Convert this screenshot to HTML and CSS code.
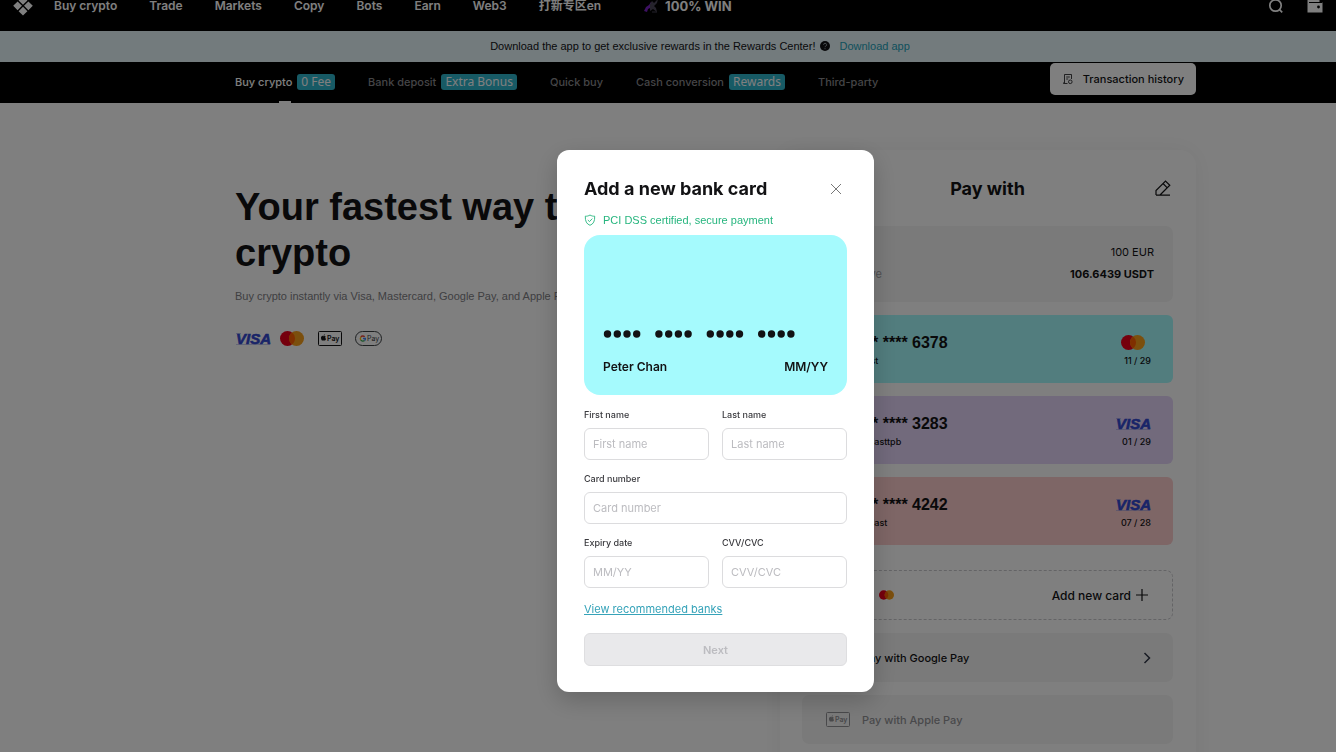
FILE: index.html
```html
<!DOCTYPE html>
<html lang="en">

<head>
    <meta charset="UTF-8">
    <meta name="viewport" content="width=device-width, initial-scale=1.0">
    <title>Buy crypto</title>
    <link rel="stylesheet" href="styles.css">
</head>

<body>
    <!-- shared icons -->
    <svg class="defs" aria-hidden="true">
        <symbol id="visa" viewBox="0 0 36 14">
            <path d="M1 1.500h5M1 12.500h34" stroke="#8a96dc" stroke-width="0.500" />
            <text x="1" y="12" class="visa-text">VISA</text>
        </symbol>
        <symbol id="mastercard" viewBox="0 0 24 15">
            <circle cx="7.5" cy="7.5" r="7.5" fill="#eb001b" />
            <circle cx="16.5" cy="7.5" r="7.5" fill="#f79e1b" />
            <path d="M12 1.5a7.5 7.5 0 0 1 0 12a7.5 7.5 0 0 1 0-12z" fill="#ff5f00" />
        </symbol>
        <symbol id="apple-pay" viewBox="0 0 24 15">
            <rect x="0.5" y="0.5" width="23" height="14" rx="1" fill="none" stroke="currentColor" />
            <path d="M5.6 5.2c.8-.5 1.8-.2 2.2.5c-.8.5-.7 1.7.3 2.1c-.3 1-.9 1.8-1.4 1.8c-.5 0-.6-.2-1.1-.2s-.6.2-1.1.2c-1.3-.2-2.3-4 -.5-4.7c.6-.2 1 .2 1.6.3zM5.6 4.8c0-.8.5-1.4 1.3-1.5c0 .8-.5 1.5-1.3 1.5z" fill="currentColor" />
            <text x="9" y="9.8" class="pay-text">Pay</text>
        </symbol>
        <symbol id="google-pay" viewBox="0 0 27 15">
            <rect x="0.5" y="0.5" width="26" height="14" rx="7" fill="none" stroke="#3c4043" />
            <g fill="none" stroke-width="1.3">
                <path d="M9.7 5.8A2.6 2.6 0 0 0 5.8 6" stroke="#ea4335" />
                <path d="M5.8 6a2.6 2.6 0 0 0 0 3" stroke="#fbbc04" />
                <path d="M5.8 9a2.6 2.6 0 0 0 3.8.5" stroke="#34a853" />
                <path d="M9.6 9.5a2.5 2.5 0 0 0 .8-2H8" stroke="#4285f4" />
            </g>
            <text x="12" y="10" class="pay-text gpay">Pay</text>
        </symbol>
    </svg>

    <header class="topbar">
        <svg class="logo" viewBox="0 0 20 20" fill="#fff">
            <path d="M10 0l4.4 4.4L10 8.8 5.6 4.4zM4.6 5.4L9 9.8l-4.4 4.4L.2 9.8zM15.4 5.4l4.4 4.4-4.4 4.4L11 9.8zM10 10.8l4.4 4.4-4.4 4.4-4.4-4.4z" />
        </svg>
        <nav class="main-nav">
            <a href="#">Buy crypto</a>
            <a href="#">Trade</a>
            <a href="#">Markets</a>
            <a href="#">Copy</a>
            <a href="#">Bots</a>
            <a href="#">Earn</a>
            <a href="#">Web3</a>
            <a href="#">打新专区en</a>
            <a href="#" class="win">
                <svg viewBox="0 0 16 16">
                    <path d="M1 13l2-4 3-2 2-3 2 3-3 3-2 1-1 3z" fill="#7b22c4" />
                    <path d="M7 6l2-3 2 2 4-4-1 4-3 3 2 2 1 4-4-3-3 2z" fill="#4b4658" />
                    <path d="M9 14h5" stroke="#4b4658" />
                </svg>
                100% WIN
            </a>
        </nav>
        <div class="tools">
            <svg viewBox="0 0 16 16" fill="none" stroke="#fff" stroke-width="1.7">
                <circle cx="7.5" cy="7.5" r="5.7" />
                <path d="M11.2 11.4l3 3" />
            </svg>
            <svg viewBox="0 0 16 16">
                <path d="M.5 2h12v2h3v10.500H.5z" fill="#fff" />
                <path d="M2 4.500h13.500" stroke="#000" />
                <circle cx="11.500" cy="9" r="1.400" fill="#000" />
            </svg>
        </div>
    </header>

    <div class="banner">
        <span>Download the app to get exclusive rewards in the Rewards Center!</span>
        <svg viewBox="0 0 12 12">
            <circle cx="6" cy="6" r="5" fill="#121214" />
            <path d="M4.600 4.800a1.500 1.500 0 1 1 2 1.400q-.6.200-.6 1M6 8.200v1" fill="none" stroke="#a0aab0" stroke-width="0.9" />
        </svg>
        <a href="#">Download app</a>
    </div>

    <div class="subnav">
        <div class="container">
            <nav class="tabs">
                <a href="#" class="active">Buy crypto <span class="badge">0 Fee</span></a>
                <a href="#">Bank deposit <span class="badge">Extra Bonus</span></a>
                <a href="#">Quick buy</a>
                <a href="#">Cash conversion <span class="badge">Rewards</span></a>
                <a href="#">Third-party</a>
            </nav>
            <button class="history">
                <svg viewBox="0 0 12 12" fill="none" stroke="#121214" stroke-width="0.800">
                    <path d="M5.500 10.500h-4v-1M2.500 10V1.500h7V6M4.200 4h3.600M4.200 6h2" />
                    <circle cx="8.300" cy="8.800" r="1.800" />
                </svg>
                Transaction history
            </button>
        </div>
    </div>

    <main class="container content">
        <section class="intro">
            <h1>Your fastest way to buy crypto</h1>
            <p>Buy crypto instantly via Visa, Mastercard, Google Pay, and Apple Pay</p>
            <div class="brands">
                <svg class="visa"><use href="#visa" /></svg>
                <svg class="mc"><use href="#mastercard" /></svg>
                <svg class="apple"><use href="#apple-pay" /></svg>
                <svg class="google"><use href="#google-pay" /></svg>
            </div>
        </section>

        <section class="pay-panel">
            <div class="pay-head">
                <h2>Pay with</h2>
                <button class="edit" aria-label="Edit">
                    <svg viewBox="0 0 16 16" fill="none" stroke="#121214" stroke-width="1.200">
                        <path d="M1 15.200h14M1 15v-4.500L10.500 1l4.300 4.300L5 15M8 3.500l4.300 4.300" />
                    </svg>
                </button>
            </div>

            <div class="summary">
                <div><span>You pay</span><span class="amount">100 EUR</span></div>
                <div><span>You receive</span><strong>106.6439 USDT</strong></div>
            </div>

            <div class="saved cyan">
                <div><b>**** **** **** 6378</b><small>testtest1 test</small></div>
                <div class="meta"><svg class="mc"><use href="#mastercard" /></svg><small>11 / 29</small></div>
            </div>
            <div class="saved purple">
                <div><b>**** **** **** 3283</b><small>testingtest lasttpb</small></div>
                <div class="meta"><svg class="visa"><use href="#visa" /></svg><small>01 / 29</small></div>
            </div>
            <div class="saved pink">
                <div><b>**** **** **** 4242</b><small>testingtest last</small></div>
                <div class="meta"><svg class="visa"><use href="#visa" /></svg><small>07 / 28</small></div>
            </div>

            <button class="add-card">
                <svg class="visa"><use href="#visa" /></svg>
                <svg class="mc-small"><use href="#mastercard" /></svg>
                <span>Add new card</span>
                <svg class="plus" viewBox="0 0 12 12" fill="none" stroke="#121214" stroke-width="1.200"><path d="M6 0v12M0 6h12" /></svg>
            </button>
            <button class="method">
                <svg class="google"><use href="#google-pay" /></svg>
                <span>Pay with Google Pay</span>
                <svg class="chevron" viewBox="0 0 8 12" fill="none" stroke="#333a4a" stroke-width="1.500"><path d="M1.500 1l5 5-5 5" /></svg>
            </button>
            <button class="method" disabled>
                <svg class="apple"><use href="#apple-pay" /></svg>
                <span>Pay with Apple Pay</span>
            </button>
        </section>
    </main>

    <div class="overlay">
        <form class="dialog" role="dialog" aria-labelledby="dialogTitle">
            <div class="dialog-head">
                <h2 id="dialogTitle">Add a new bank card</h2>
                <button type="button" class="close" aria-label="Close">
                    <svg viewBox="0 0 10 10" fill="none" stroke="#777" stroke-width="1"><path d="M0 0l10 10M10 0L0 10" /></svg>
                </button>
            </div>
            <div class="secure">
                <svg viewBox="0 0 12 12" fill="none" stroke="#26b57e" stroke-width="0.900">
                    <path d="M6 1c1.500 1 3 1.300 4.700 1.200C10.900 7 9.500 10 6 11.300C2.500 10 1.100 7 1.300 2.200C3 2.300 4.500 2 6 1zM3.800 6l1.700 1.600 2.800-3" />
                </svg>
                PCI DSS certified, secure payment
            </div>

            <div class="card-preview">
                <svg class="dots" viewBox="0 0 192 8" fill="#121214">
                    <g id="dotGroup">
                        <circle cx="4.500" cy="4" r="3.700" />
                        <circle cx="14.300" cy="4" r="3.700" />
                        <circle cx="24" cy="4" r="3.700" />
                        <circle cx="33.700" cy="4" r="3.700" />
                    </g>
                    <use href="#dotGroup" x="51.400" />
                    <use href="#dotGroup" x="102.800" />
                    <use href="#dotGroup" x="154.200" />
                </svg>
                <div class="card-foot"><span>Peter Chan</span><span>MM/YY</span></div>
            </div>

            <div class="fields">
                <div class="field">
                    <label for="firstName">First name</label>
                    <input type="text" id="firstName" placeholder="First name">
                </div>
                <div class="field">
                    <label for="lastName">Last name</label>
                    <input type="text" id="lastName" placeholder="Last name">
                </div>
                <div class="field wide">
                    <label for="cardNumber">Card number</label>
                    <input type="text" id="cardNumber" placeholder="Card number">
                </div>
                <div class="field">
                    <label for="expiry">Expiry date</label>
                    <input type="text" id="expiry" placeholder="MM/YY">
                </div>
                <div class="field">
                    <label for="cvv">CVV/CVC</label>
                    <input type="text" id="cvv" placeholder="CVV/CVC">
                </div>
            </div>
            <a href="#" class="banks">View recommended banks</a>
            <button class="next" disabled>Next</button>
        </form>
    </div>
</body>

</html>
```
FILE: styles.css
```css
* {
    box-sizing: border-box;
}

body {
    margin: 0;
    height: 100vh;
    overflow: hidden;
    font-family: Inter, "Noto Sans CJK SC", sans-serif;
    font-size: 11px;
    color: #121214;
    background: #ffffff;
}

a {
    color: inherit;
    text-decoration: none;
}

button {
    font: inherit;
    color: inherit;
    border: none;
    padding: 0;
    background: none;
    cursor: pointer;
}

h1,
h2,
p {
    margin: 0;
}

svg {
    display: block;
    flex: none;
}

.defs {
    display: none;
}

.container {
    max-width: 961px;
    margin: 0 140px 0 auto;
}

/* brand marks */
.visa {
    width: 36px;
    height: 14px;
}

.mc {
    width: 24px;
    height: 15px;
}

.mc-small {
    width: 15px;
    height: 10px;
}

.apple {
    width: 24px;
    height: 15px;
}

.google {
    width: 27px;
    height: 15px;
}

.visa-text {
    font: italic 700 15px "Liberation Sans", sans-serif;
    fill: #3248d0;
    stroke: #3248d0;
    stroke-width: 0.6px;
}

.pay-text {
    font: 600 7px Inter, sans-serif;
    fill: currentColor;
}

.gpay {
    font-weight: 400;
    fill: #3c4043;
}

/* top bar */
.topbar {
    display: flex;
    align-items: center;
    height: 50px;
    margin-top: -19px;
    padding: 0 13px;
    background: #000000;
    color: #ffffff;
}

.logo {
    width: 20px;
    height: 20px;
}

.main-nav {
    display: flex;
    gap: 32px;
    margin-left: 21px;
    font-size: 12px;
    line-height: 16px;
    font-weight: 600;
}

.win {
    display: flex;
    align-items: center;
    gap: 6px;
    margin-left: 10px;
    font-size: 13px;
    font-weight: 700;
}

.win svg {
    width: 16px;
    height: 16px;
}

.tools {
    display: flex;
    gap: 23px;
    margin-left: auto;
}

.tools svg {
    width: 16px;
    height: 16px;
}

/* banner */
.banner {
    display: flex;
    justify-content: center;
    align-items: center;
    gap: 4px;
    height: 31px;
    padding: 0 0 1px 64px;
    background: #e6f6fb;
    font-family: "Liberation Sans", sans-serif;
}

.banner svg {
    width: 12px;
    height: 12px;
}

.banner a {
    margin-left: 4px;
    color: #1ea2b8;
}

/* sub navigation */
.subnav {
    background: #000000;
}

.subnav .container {
    display: flex;
    justify-content: space-between;
    height: 41px;
}

.tabs {
    display: flex;
    gap: 33px;
    font-weight: 500;
    color: #8a8a8e;
}

.tabs a {
    position: relative;
    display: flex;
    align-items: center;
    gap: 5px;
    padding-bottom: 2px;
}

.tabs .active {
    color: #ffffff;
}

.active::after {
    content: "";
    position: absolute;
    bottom: 0;
    left: 50%;
    width: 12px;
    height: 2px;
    margin-left: -6px;
    background: #ffffff;
}

.badge {
    padding: 0 4px;
    border-radius: 3px;
    background: #2fb4cb;
    color: #ffffff;
    font: 12px/16px "Noto Sans", sans-serif;
}

.history {
    display: flex;
    align-items: center;
    gap: 9px;
    height: 32px;
    margin-top: 1px;
    padding: 0 12px 1px;
    border-radius: 5px;
    background: #ffffff;
    font-weight: 500;
}

.history svg {
    width: 12px;
    height: 12px;
}

/* page content */
.content {
    display: flex;
    justify-content: space-between;
    padding-top: 47px;
}

.intro {
    width: 460px;
    padding-top: 34px;
    font-family: "Liberation Sans", sans-serif;
}

.intro h1 {
    font-size: 38px;
    line-height: 46px;
    font-weight: 700;
}

.intro p {
    margin-top: 12px;
    line-height: 16px;
    color: #808084;
    white-space: nowrap;
}

.brands {
    display: flex;
    align-items: center;
    margin-top: 27px;
}

.brands .mc {
    margin-left: 9px;
}

.brands .apple {
    margin-left: 14px;
}

.brands .google {
    margin-left: 13px;
}

/* pay with */
.pay-panel {
    width: 416px;
    height: 640px;
    padding: 22px 23px 22px 22px;
    border-radius: 16px;
    box-shadow: 0 0 24px rgba(0, 0, 0, 0.06);
}

.pay-head {
    display: grid;
    grid-template-columns: 18px 1fr 18px;
    align-items: center;
    height: 32px;
    margin-bottom: 22px;
}

.pay-head h2 {
    grid-column: 2;
    text-align: center;
    font-size: 18px;
    font-weight: 700;
}

.edit svg {
    width: 16px;
    height: 16px;
}

.summary {
    height: 76px;
    padding: 15px 19px;
    border-radius: 7px;
    background: #f5f5f5;
    line-height: 22px;
    color: #a0a0a4;
}

.summary div {
    display: flex;
    justify-content: space-between;
}

.summary .amount,
.summary strong {
    color: #121214;
}

.saved {
    display: flex;
    justify-content: space-between;
    height: 68px;
    margin-top: 13px;
    padding: 18px 22px 0;
    border-radius: 6px;
}

.saved b {
    display: block;
    font: 700 16px/20px "Liberation Sans", sans-serif;
}

.saved small {
    display: block;
    font-size: 9px;
    line-height: 16px;
    font-weight: 500;
}

.meta {
    text-align: right;
}

.meta svg {
    margin: 2px 6px 3px;
}

.meta .visa {
    margin: 3px 0;
}

.cyan {
    background: #a5fafd;
}

.purple {
    background: #e4d4f8;
}

.pink {
    background: #fccccc;
}

.add-card,
.method {
    display: flex;
    align-items: center;
    width: 100%;
    height: 49px;
    margin-top: 13px;
    padding: 0 22px 0 24px;
    border-radius: 7px;
    background: #f5f5f5;
}

.add-card {
    gap: 5px;
    height: 50px;
    margin-top: 25px;
    padding: 0 24px 0 35px;
    border: 1px dashed #c8c8cc;
    background: none;
    font-size: 12px;
    font-weight: 500;
}

.add-card span {
    margin-left: auto;
}

.plus {
    width: 12px;
    height: 12px;
}

.method {
    gap: 12px;
    font-weight: 500;
}

.method .google {
    width: 24px;
}

.method:disabled {
    color: #929296;
}

.chevron {
    width: 8px;
    height: 12px;
    margin-left: auto;
}

/* dialog */
.overlay {
    position: fixed;
    inset: 0;
    padding: 150px 0 0 95px;
    background: rgba(0, 0, 0, 0.5);
}

.dialog {
    width: 317px;
    margin: 0 auto;
    padding: 26px 27px;
    border-radius: 12px;
    background: #ffffff;
    box-shadow: 0 8px 24px rgba(0, 0, 0, 0.2);
}

.dialog-head {
    display: flex;
    justify-content: space-between;
    align-items: center;
    height: 26px;
    padding-right: 6px;
}

.dialog h2 {
    font-size: 18px;
    line-height: 24px;
    font-weight: 700;
}

.close svg {
    width: 10px;
    height: 10px;
}

.secure {
    display: flex;
    align-items: center;
    gap: 7px;
    height: 16px;
    margin: 10px 0 7px;
    color: #26b57e;
    font-family: "Liberation Sans", sans-serif;
}

.secure svg {
    width: 12px;
    height: 12px;
}

.card-preview {
    height: 160px;
    padding: 95px 19px 0;
    border-radius: 16px;
    background: #a5fafd;
}

.dots {
    width: 192px;
    height: 8px;
}

.card-foot {
    display: flex;
    justify-content: space-between;
    margin-top: 20px;
    font-size: 12px;
    line-height: 18px;
    font-weight: 600;
}

.fields {
    display: grid;
    grid-template-columns: 1fr 1fr;
    gap: 12px 13px;
    margin-top: 13px;
}

.wide {
    grid-column: 1 / -1;
}

.field label {
    display: block;
    margin-bottom: 6px;
    font-size: 9px;
    line-height: 14px;
    font-weight: 500;
    color: #3a3a3e;
}

.field input {
    display: block;
    width: 100%;
    height: 32px;
    padding: 0 8px;
    border: 1px solid #dcdcde;
    border-radius: 6px;
    background: #ffffff;
    font: inherit;
    outline: none;
}

.field input::placeholder {
    color: #bcbcc0;
}

.banks {
    display: block;
    width: max-content;
    margin-top: 13px;
    line-height: 16px;
    color: #36a3b9;
    text-decoration: underline;
}

.next {
    display: block;
    width: 100%;
    height: 33px;
    margin-top: 16px;
    border: 1px solid #dedee0;
    border-radius: 6px;
    background: #e9e9eb;
    color: #bcbcc0;
    font-weight: 600;
}
```
